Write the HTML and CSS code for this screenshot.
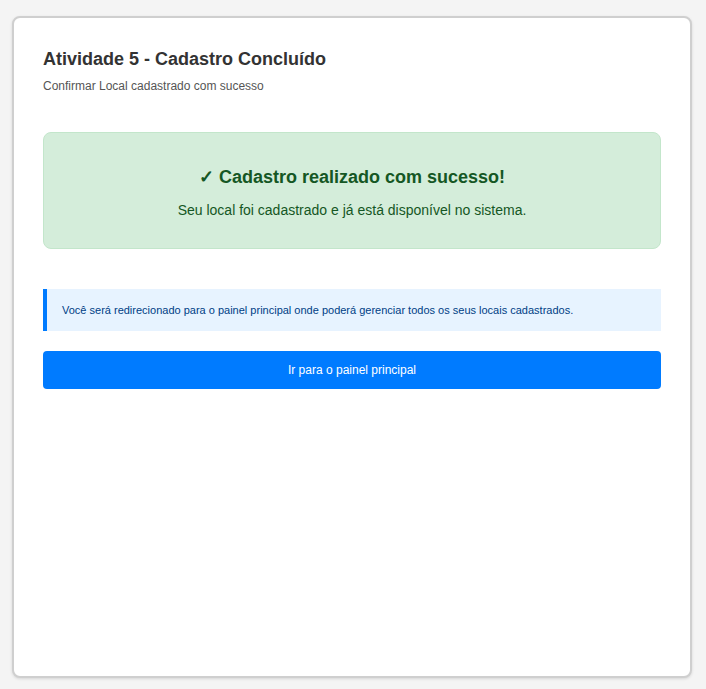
FILE: index.html
```html
<!DOCTYPE html>
<html lang="pt">
<head>
<meta charset="utf-8">
<link rel="stylesheet" href="styles.css">
</head>
<body>
<div class="card">
  <h1 class="title">Atividade 5 - Cadastro Concluído</h1>
  <p class="subtitle">Confirmar Local cadastrado com sucesso</p>
  <div class="success">
    <h2 class="success-title">✓ Cadastro realizado com sucesso!</h2>
    <p class="success-text">Seu local foi cadastrado e já está disponível no sistema.</p>
  </div>
  <div class="info">Você será redirecionado para o painel principal onde poderá gerenciar todos os seus locais cadastrados.</div>
  <button class="btn">Ir para o painel principal</button>
</div>
</body>
</html>
```
FILE: styles.css
```css
html, body { margin: 0; padding: 0; }
body {
  background: #f4f4f4;
  font-family: "Liberation Sans", Arial, sans-serif;
  padding: 16px 12px;
}
.card {
  box-sizing: border-box;
  width: 680px;
  height: 662px;
  background: #fff;
  border: 2px solid #cfcfcf;
  border-radius: 8px;
  box-shadow: 0 1px 3px rgba(0,0,0,0.12);
  padding: 29px 29px;
}
.title {
  margin: 0;
  font-size: 18px;
  font-weight: bold;
  color: #333;
  line-height: 24px;
}
.subtitle {
  margin: 7px 0 0;
  font-size: 12px;
  color: #555;
  line-height: 16px;
}
.success {
  margin-top: 38px;
  background: #d4edda;
  border: 1px solid #c3e6cb;
  border-radius: 8px;
  height: 117px;
  box-sizing: border-box;
  padding-top: 32px;
  text-align: center;
  color: #155724;
}
.success-title {
  margin: 0;
  font-size: 18px;
  font-weight: bold;
  line-height: 24px;
}
.success-text {
  margin: 12px 0 0;
  font-size: 14px;
  line-height: 18px;
}
.info {
  margin-top: 40px;
  background: #e7f3ff;
  border-left: 4px solid #007bff;
  height: 42px;
  box-sizing: border-box;
  padding: 0 15px;
  display: flex;
  align-items: center;
  font-size: 11px;
  color: #004085;
}
.btn {
  display: block;
  width: 100%;
  margin-top: 20px;
  height: 38px;
  border: none;
  border-radius: 4px;
  background: #007bff;
  color: #fff;
  font-family: "Liberation Sans", Arial, sans-serif;
  font-size: 12px;
  font-weight: normal;
}
```
